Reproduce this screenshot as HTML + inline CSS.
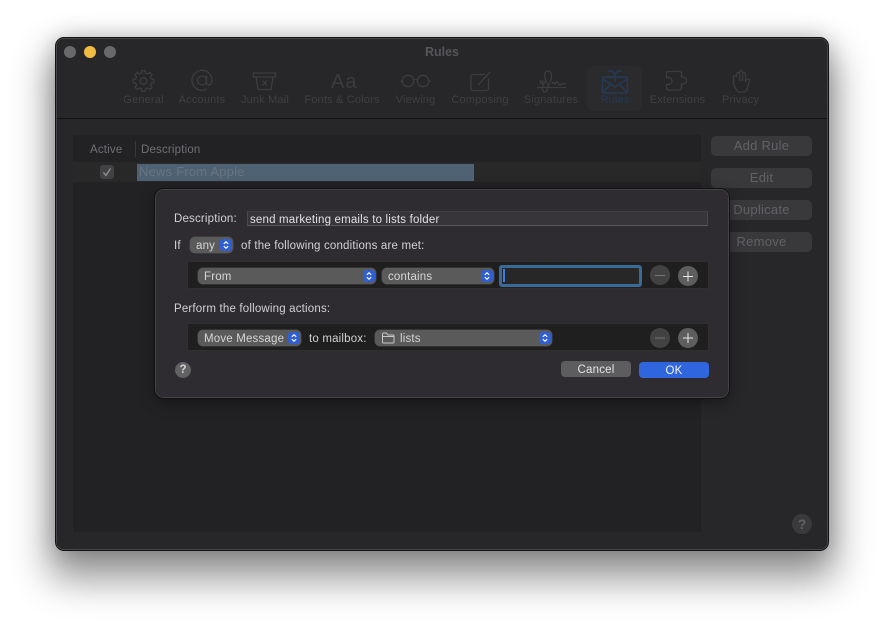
<!DOCTYPE html>
<html><head><meta charset="utf-8"><style>
html,body{margin:0;padding:0;width:884px;height:624px;overflow:hidden;background:#fff;font-family:"Liberation Sans",sans-serif}
.a{position:absolute;box-sizing:border-box}
.t{position:absolute;white-space:nowrap;line-height:14px;height:14px}
.lb{font-size:11px;letter-spacing:.18px;color:#3f3f42;transform:translateX(-50%);top:93px;filter:blur(.35px)}
.d{font-size:11.5px;letter-spacing:.18px;color:#d2d1d3}
.btn{position:absolute;left:711px;width:101px;height:20px;border-radius:5px;background:#39383b;color:#626165;font-size:13px;letter-spacing:.25px;text-align:center;line-height:20px}
.pop{position:absolute;box-sizing:border-box;height:16px;border-radius:5px;background:#5a5a5b;box-shadow:0 0 0 .5px #4a4a4c;color:#d6d6d7;font-size:11.5px;letter-spacing:.18px;line-height:18px;padding-left:6px;white-space:nowrap}
.ar{position:absolute;right:1.500px;top:2px;width:12px;height:12px;border-radius:3px;background:#2f5fd0}
.ar svg{display:block}
.box{position:absolute;box-sizing:border-box;left:187px;width:522px;height:28px;background:#1f1f1f;border:1px solid #303030}
.c{position:absolute;width:20px;height:20px;border-radius:50%}
</style></head><body>
<div class="a" style="left:55px;top:37px;width:774px;height:514px;border-radius:9px;box-shadow:0 22px 38px 6px rgba(0,0,0,.42),0 0 22px rgba(0,0,0,.2)"></div>
<div class="a" style="left:55px;top:37px;width:774px;height:514px;border-radius:9px;background:#272629;border:1px solid #111;box-shadow:inset 0 0 0 .5px #666;overflow:hidden"></div>
<div class="a" style="left:64px;top:46px;width:12px;height:12px;border-radius:50%;background:#69686b"></div>
<div class="a" style="left:84px;top:46px;width:12px;height:12px;border-radius:50%;background:#f2bc42"></div>
<div class="a" style="left:104px;top:46px;width:12px;height:12px;border-radius:50%;background:#69686b"></div>
<div class="t" style="left:0;width:884px;text-align:center;top:45px;font-size:12.500px;font-weight:bold;color:#565559;filter:blur(.3px)">Rules</div>
<div class="a" style="left:57px;top:118px;width:770px;height:1px;background:#111"></div>
<div class="a" style="left:587px;top:66px;width:55px;height:45px;border-radius:6px;background:#2b2a2d"></div>

<svg class="a" style="left:0;top:0;filter:blur(.35px)" width="884" height="120" fill="none" stroke="#3d3d40" stroke-width="1.300">
<g transform="translate(143.500 81)" stroke-linejoin="round">
<path d="M7.730-2.070L10.370-1.640V1.640L7.730 2.070A8 8 0 0 1 6.930 4"/>
<path transform="rotate(45)" d="M7.730-2.070L10.370-1.640V1.640L7.730 2.070A8 8 0 0 1 6.930 4"/>
<path transform="rotate(90)" d="M7.730-2.070L10.370-1.640V1.640L7.730 2.070A8 8 0 0 1 6.930 4"/>
<path transform="rotate(135)" d="M7.730-2.070L10.370-1.640V1.640L7.730 2.070A8 8 0 0 1 6.930 4"/>
<path transform="rotate(180)" d="M7.730-2.070L10.370-1.640V1.640L7.730 2.070A8 8 0 0 1 6.930 4"/>
<path transform="rotate(225)" d="M7.730-2.070L10.370-1.640V1.640L7.730 2.070A8 8 0 0 1 6.930 4"/>
<path transform="rotate(270)" d="M7.730-2.070L10.370-1.640V1.640L7.730 2.070A8 8 0 0 1 6.930 4"/>
<path transform="rotate(315)" d="M7.730-2.070L10.370-1.640V1.640L7.730 2.070A8 8 0 0 1 6.930 4"/>
<circle r="3.300"/>
</g>
<circle cx="202" cy="80.500" r="4.500"/><path d="M206.500 75.500v6.500q0 3 2.500 3t3-5a10 10 0 1 0-5 9"/>
<path d="M253.500 73h22v4h-22zM256 77l2 12.500h13l2-12.500M262.500 80.500l4.500 5M267 80.500l-4.500 5"/>
<circle cx="408" cy="81" r="5.700"/><circle cx="423" cy="81" r="5.700"/><path d="M413.500 80q2-1.500 4 0M402.300 81l-2 .5M428.700 81l2 .5"/>
<path d="M485 74.500h-12a2 2 0 0 0-2 2v12a2 2 0 0 0 2 2h13.500a2 2 0 0 0 2-2v-10M478 85L490 72"/>
<path d="M537 87.500h29.500M540 80.500l3.500 3.500M543.500 80.500l-3.500 3.500M549 86C544 80 543 71 548 71C553 71 552 80 549 84C547 87 548 92 545 92C541 92 542 84 546 81M552 84c2-4 2 1 3 0s2-4 3-1 2 2 4 1 3 0 4 0"/>
<path d="M668.500 71.500h11a2 2 0 0 1 2 2v3.500h1.500a3.500 3.500 0 1 1 0 7h-1.500v4a2 2 0 0 1-2 2h-11a2 2 0 0 1-2-2v-3.500h2a3.500 3.500 0 0 0 0-7h-2v-4a2 2 0 0 1 2-2z"/>
<path d="M736 89c-2-3-2.500-4-2.500-7v-5a1.500 1.500 0 0 1 3 0v-3a1.500 1.500 0 0 1 3 0v-2a1.500 1.500 0 0 1 3 0v2a1.500 1.500 0 0 1 3 0v7l1-1a1.500 1.500 0 0 1 3 1l-2 7c-.5 2-2 4-4 4h-4c-2 0-3-2-3.500-3zM739.500 74v7M742.500 72v9M745.500 74v7"/>
<g stroke="#243a58"><path d="M604 77h22a1.500 1.500 0 0 1 1.500 1.500v13a1.500 1.500 0 0 1-1.500 1.500h-22a1.500 1.500 0 0 1-1.500-1.500v-13a1.500 1.500 0 0 1 1.500-1.500zM603 79l12 8 12-8M603 92l8-8M627 92l-8-8M615 82v-8l-4-4M615 74l4-4M608 71h4M618 71h4" stroke-width="1.500"/></g>
</svg>
<div class="t" style="left:331px;top:71px;font-size:20px;line-height:22px;height:22px;color:#3b3b3e;letter-spacing:1px;filter:blur(.35px)">Aa</div>

<div class="t lb" style="left:143.500px">General</div>
<div class="t lb" style="left:202px">Accounts</div>
<div class="t lb" style="left:265px">Junk Mail</div>
<div class="t lb" style="left:342px">Fonts &amp; Colors</div>
<div class="t lb" style="left:415.500px">Viewing</div>
<div class="t lb" style="left:480px">Composing</div>
<div class="t lb" style="left:551px">Signatures</div>
<div class="t lb" style="left:615px;color:#243a58">Rules</div>
<div class="t lb" style="left:677.500px">Extensions</div>
<div class="t lb" style="left:740.500px">Privacy</div>

<div class="a" style="left:73px;top:135px;width:628px;height:397px;background:#222124"></div>
<div class="a" style="left:73px;top:162px;width:628px;height:20px;background:#282829"></div>
<div class="a" style="left:135px;top:141px;width:1px;height:16px;background:#39383b"></div>
<div class="t" style="left:90px;top:143px;font-size:11.500px;letter-spacing:.18px;color:#717074">Active</div>
<div class="t" style="left:141px;top:143px;font-size:11.500px;letter-spacing:.18px;color:#717074">Description</div>
<div class="a" style="left:100px;top:165px;width:14px;height:14px;border-radius:3px;background:#424244"></div>
<svg class="a" style="left:100px;top:165px" width="14" height="14" fill="none" stroke="#8f8f91" stroke-width="1.400"><path d="M3.500 7.500l2.500 3 4.500-7"/></svg>
<div class="a" style="left:137px;top:164px;width:337px;height:17px;background:#4f6274"></div>
<div class="t" style="left:139px;top:165px;font-size:13px;letter-spacing:.2px;color:#68747f">News From Apple</div>

<div class="btn" style="top:136px">Add Rule</div>
<div class="btn" style="top:168px">Edit</div>
<div class="btn" style="top:200px">Duplicate</div>
<div class="btn" style="top:232px">Remove</div>
<div class="a" style="left:792px;top:514px;width:20px;height:20px;border-radius:50%;background:#3a393c;color:#616064;font-size:14px;font-weight:bold;text-align:center;line-height:20px">?</div>

<div class="a" style="left:154px;top:188px;width:576px;height:211px;border-radius:10px;background:#2f2c31;border:1px solid #111;box-shadow:inset 0 0 0 .5px #5c5a5e,0 4px 14px rgba(0,0,0,.35)"></div>
<div class="t d" style="left:174px;top:212px">Description:</div>
<div class="a" style="left:247px;top:211px;width:461px;height:15px;background:#37343a;border:1px solid #4a484c;border-top-color:#413f43;border-bottom-color:#5a585c"></div>
<div class="t d" style="left:250px;top:213px;color:#e2e1e3">send marketing emails to lists folder</div>
<div class="t d" style="left:174px;top:239px">If</div>
<div class="pop" style="left:190px;top:237px;width:43px">any<span class="ar"><svg width="12" height="12" fill="none" stroke="#fff" stroke-width="1.100"><path d="M3.800 4.800L6 2.800l2.200 2M3.800 7.200L6 9.200l2.200-2"/></svg></span></div>
<div class="t d" style="left:241px;top:239px">of the following conditions are met:</div>

<div class="box" style="top:261px"></div>
<div class="pop" style="left:198px;top:268px;width:178px">From<span class="ar"><svg width="12" height="12" fill="none" stroke="#fff" stroke-width="1.100"><path d="M3.800 4.800L6 2.800l2.200 2M3.800 7.200L6 9.200l2.200-2"/></svg></span></div>
<div class="pop" style="left:382px;top:268px;width:112px">contains<span class="ar"><svg width="12" height="12" fill="none" stroke="#fff" stroke-width="1.100"><path d="M3.800 4.800L6 2.800l2.200 2M3.800 7.200L6 9.200l2.200-2"/></svg></span></div>
<div class="a" style="left:498.500px;top:264.500px;width:143px;height:22px;border-radius:3px;background:#272728;border:3px solid #3a6a98"></div>
<div class="a" style="left:503px;top:269px;width:2px;height:13px;background:#3b7be8"></div>
<div class="c" style="left:650px;top:265px;background:#424243"></div>
<div class="c" style="left:678px;top:266px;background:#5e5e5f"></div>

<div class="t d" style="left:174px;top:302px">Perform the following actions:</div>
<div class="box" style="top:323px"></div>
<div class="pop" style="left:198px;top:330px;width:103px">Move Message<span class="ar"><svg width="12" height="12" fill="none" stroke="#fff" stroke-width="1.100"><path d="M3.800 4.800L6 2.800l2.200 2M3.800 7.200L6 9.200l2.200-2"/></svg></span></div>
<div class="t d" style="left:309px;top:332px">to mailbox:</div>
<div class="pop" style="left:375px;top:330px;width:177px;padding-left:25px">lists<span class="ar"><svg width="12" height="12" fill="none" stroke="#fff" stroke-width="1.100"><path d="M3.800 4.800L6 2.800l2.200 2M3.800 7.200L6 9.200l2.200-2"/></svg></span></div>
<svg class="a" style="left:381px;top:332px" width="14" height="12" fill="none" stroke="#c8c8c9" stroke-width="1"><path d="M1.500 3V2a1 1 0 0 1 1-1h3l1.500 2h5a1 1 0 0 1 1 1v6a1 1 0 0 1-1 1h-9.500a1 1 0 0 1-1-1zM1.500 4.500h11"/></svg>
<div class="c" style="left:650px;top:328px;background:#424243"></div>
<div class="c" style="left:678px;top:328px;background:#5e5e5f"></div>
<svg class="a" style="left:640px;top:260px" width="70" height="90" fill="none" stroke-width="1"><path d="M15 15.500h10M15 78h10" stroke="#77777a"/><path d="M43 16.500h10M48 11.500v10M43 78h10M48 73v10" stroke="#e8e8e8"/></svg>

<div class="a" style="left:175px;top:362px;width:16px;height:16px;border-radius:50%;background:#626163;color:#d4d4d5;font-size:11.500px;font-weight:bold;text-align:center;line-height:16px">?</div>
<div class="a" style="left:561px;top:361px;width:70px;height:16px;border-radius:4px;background:#5d5c5e;color:#e4e4e5;font-size:11.500px;letter-spacing:.2px;text-align:center;line-height:18px">Cancel</div>
<div class="a" style="left:639px;top:362px;width:70px;height:16px;border-radius:4px;background:#2f66de;color:#f2f5fc;font-size:11.500px;letter-spacing:.2px;text-align:center;line-height:18px">OK</div>
</body></html>
